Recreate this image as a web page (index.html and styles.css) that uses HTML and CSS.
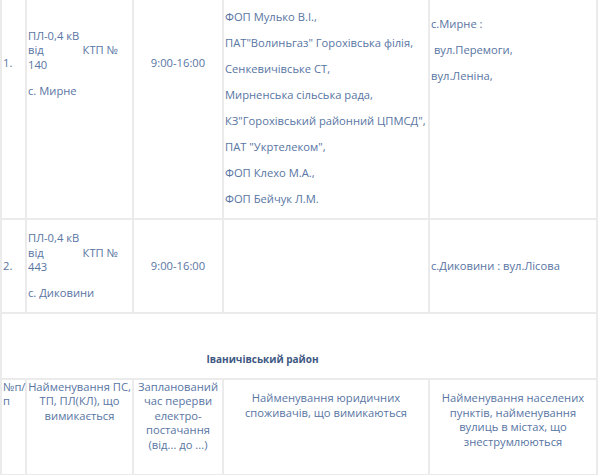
FILE: index.html
```html
<!DOCTYPE html>
<html lang="uk">
<head>
<meta charset="utf-8">
<title>Графік відключень</title>
<link rel="stylesheet" href="styles.css">
</head>
<body>
<div class="page">
<table class="grid">
<colgroup>
<col class="c-num"><col class="c-line"><col class="c-time"><col class="c-cons"><col class="c-street">
</colgroup>
<tbody>
<tr>
<td class="num mid">1.</td>
<td class="line mid">
<p><span class="ln">ПЛ-0,4 кВ</span><span class="ln spread"><span>від</span><span>КТП №</span></span><span class="ln">140</span></p>
<p>с. Мирне</p>
</td>
<td class="time mid">9:00-16:00</td>
<td class="cons mid first">
<p>ФОП Романюк Р.В.,</p>
<p>ПП "Агросвіт",</p>
<p>ФОП Гуменюк Р.П.,</p>
<p>ФОП Мулько В.І.,</p>
<p>ПАТ"Волиньгаз" Горохівська філія,</p>
<p>Сенкевичівське СТ,</p>
<p>Мирненська сільська рада,</p>
<p>КЗ"Горохівський районний ЦПМСД",</p>
<p>ПАТ "Укртелеком",</p>
<p>ФОП Клехо М.А.,</p>
<p>ФОП Бейчук Л.М.</p>
</td>
<td class="street mid">
<p>с.Мирне :</p>
<p>&nbsp;вул.Перемоги,</p>
<p>вул.Леніна,</p>
<p>&nbsp;</p>
</td>
</tr>
<tr>
<td class="num mid">2.</td>
<td class="line mid">
<p><span class="ln">ПЛ-0,4 кВ</span><span class="ln spread"><span>від</span><span>КТП №</span></span><span class="ln">443</span></p>
<p>с. Диковини</p>
</td>
<td class="time mid">9:00-16:00</td>
<td class="cons mid"></td>
<td class="street mid"><p>с.Диковини : вул.Лісова</p></td>
</tr>
<tr>
<td class="district" colspan="5">
<p>&nbsp;</p>
<p><strong>Іваничівський район</strong></p>
</td>
</tr>
<tr class="head">
<td class="num top">№п/п</td>
<td class="line top center">Найменування ПС, ТП, ПЛ(КЛ), що вимикається</td>
<td class="time top center">Запланований час перерви електро-постачання (від... до ...)</td>
<td class="cons top center"><p>Найменування юридичних споживачів, що вимикаються</p></td>
<td class="street top center"><p>Найменування населених пунктів, найменування вулиць в містах, що знеструмлюються</p></td>
</tr>
</tbody>
</table>
</div>
</body>
</html>
```
FILE: styles.css
```css
html, body {
  margin: 0;
  padding: 0;
  background: #ffffff;
}
body {
  font-family: "Open Sans", "Noto Sans", sans-serif;
  font-size: 11.2px;
  line-height: 14.5px;
  color: #5875a3;
  overflow: hidden;
}
.page {
  width: 600px;
  height: 475px;
  overflow: hidden;
}
.grid {
  margin-top: -93px;
  width: 598px;
  table-layout: fixed;
  border-collapse: collapse;
  border: 2px solid #ebebeb;
}
.c-num { width: 25px; }
.c-line { width: 107px; }
.c-time { width: 90px; }
.c-cons { width: 206px; }
.c-street { width: 168px; }
.grid td {
  border: 2px solid #ebebeb;
  padding: 0 1px;
  text-align: left;
}
.grid p {
  margin: 11.5px 0;
}
.mid { vertical-align: middle; }
.top { vertical-align: top; }
.grid td.center { text-align: center; }
.grid td.time { text-align: center; }
.cons.first { padding-top: 11px; }
.ln { display: block; }
.spread {
  display: flex;
  justify-content: space-between;
  width: 90px;
}
.grid td.district {
  text-align: center;
  padding-right: 74px;
}
.district strong {
  font-size: 10px;
  font-weight: 700;
  color: #3d5882;
}
.head td { height: 94px; }
.head .num { word-break: break-all; }
```
